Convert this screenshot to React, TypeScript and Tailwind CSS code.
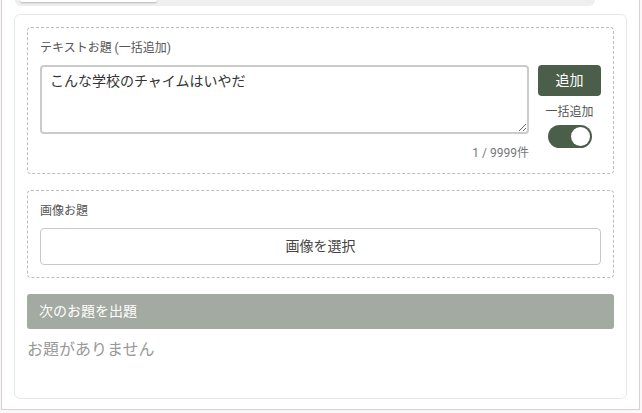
import React from "react";

const font = { fontFamily: 'Roboto, "Noto Sans CJK JP", sans-serif' };

export default function App() {
  return (
    <div className="w-[642px] h-[413px] bg-[#fbf6f8] overflow-hidden" style={font}>
      <div className="ml-[1px] w-[639px] h-[410px] bg-white border-x border-b border-[#d6d2d2]">
        {/* tab bar */}
        <div className="ml-[13px] w-[580px] h-[6px] bg-[#efefef] rounded-b-[10px] relative">
          <div className="absolute left-[5px] top-0 w-[137px] h-[2px] bg-white rounded-b-[8px] shadow-[0_1px_2px_rgba(0,0,0,0.25)]" />
        </div>
        {/* card */}
        <div className="mt-[8px] ml-[12px] w-[613px] h-[385px] border border-[#e8e8e8] rounded-[6px] p-3 flex flex-col">
          {/* text topic box */}
          <div className="border border-dashed border-[#bdbdbd] rounded-[4px] p-3">
            <div className="text-[12px] leading-[17px] text-[#555]">テキストお題 (一括追加)</div>
            <div className="mt-2 flex gap-[9px]">
              <div className="flex-1 flex flex-col">
                <textarea
                  className="h-[69px] w-full resize-y border-2 border-[#cbcbcb] rounded-[4px] px-[8px] py-[4px] text-[14px] leading-[20px] text-[#333] outline-none"
                  style={font}
                  defaultValue="こんな学校のチャイムはいやだ"
                />
                <div className="mt-[11px] text-right text-[12px] leading-[16px] text-[#777]">1 / 9999件</div>
              </div>
              <div className="w-[63px] flex flex-col items-center">
                <button className="w-[63px] h-[31px] bg-[#4b5e4a] text-white text-[14px] rounded-[4px]" style={font}>
                  追加
                </button>
                <div className="mt-[8px] text-[12px] leading-[16px] text-[#555]">一括追加</div>
                <div className="mt-[5px] w-[44px] h-[23px] rounded-full bg-[#4b5e4a] flex items-center justify-end pr-[2px]">
                  <div className="w-[19px] h-[19px] rounded-full bg-white" />
                </div>
              </div>
            </div>
          </div>
          {/* image topic box */}
          <div className="mt-[16px] border border-dashed border-[#bdbdbd] rounded-[4px] p-3">
            <div className="text-[12px] leading-[17px] text-[#555]">画像お題</div>
            <button
              className="mt-2 w-full h-[37px] border border-[#c8c8c8] rounded-[4px] bg-white text-[14px] text-[#444]"
              style={font}
            >
              画像を選択
            </button>
          </div>
          {/* next topic */}
          <div className="mt-[16px] h-[35px] bg-[#a3aaa1] rounded-[3px] flex items-center px-3 text-[14px] text-white">
            次のお題を出題
          </div>
          <div className="mt-[9px] text-[16px] leading-[24px] text-[#999]">お題がありません</div>
        </div>
      </div>
    </div>
  );
}
